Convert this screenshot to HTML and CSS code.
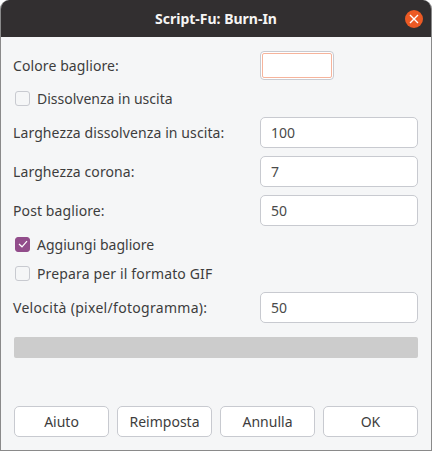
FILE: index.html
```html
<!DOCTYPE html>
<html lang="it">
<head>
<meta charset="utf-8">
<title>Script-Fu: Burn-In</title>
<link rel="stylesheet" href="styles.css">
</head>
<body>
<div class="window">
  <header class="titlebar">
    <span class="title">Script-Fu: Burn-In</span>
    <span class="close"><svg width="10" height="10" viewBox="0 0 10 10"><path d="M1 1L9 9M9 1L1 9" stroke="#fff" stroke-width="1.4" fill="none"/></svg></span>
  </header>
  <main class="content">
    <div class="row row-color">
      <label class="label">Colore bagliore:</label>
      <div class="field"><button class="color"><span class="swatch"></span></button></div>
    </div>
    <div class="check check-1"><span class="box"></span><span>Dissolvenza in uscita</span></div>
    <div class="row row-a">
      <label class="label">Larghezza dissolvenza in uscita:</label>
      <div class="field"><div class="entry">100</div></div>
    </div>
    <div class="row row-b">
      <label class="label">Larghezza corona:</label>
      <div class="field"><div class="entry">7</div></div>
    </div>
    <div class="row row-b">
      <label class="label">Post bagliore:</label>
      <div class="field"><div class="entry">50</div></div>
    </div>
    <div class="check check-2"><span class="box on"><svg width="10" height="8" viewBox="0 0 10 8"><path d="M1 4L4 6.8L9 1.2" stroke="#fff" stroke-width="1.2" fill="none"/></svg></span><span>Aggiungi bagliore</span></div>
    <div class="check check-3"><span class="box"></span><span class="wide">Prepara per il formato GIF</span></div>
    <div class="row row-c">
      <label class="label label-wide">Velocità (pixel/fotogramma):</label>
      <div class="field"><div class="entry">50</div></div>
    </div>
    <div class="progress"></div>
    <div class="buttons">
      <button class="btn">Aiuto</button>
      <button class="btn">Reimposta</button>
      <button class="btn">Annulla</button>
      <button class="btn">OK</button>
    </div>
  </main>
</div>
</body>
</html>
```
FILE: styles.css
```css
html, body { margin: 0; padding: 0; background: #fff; }
body { width: 432px; height: 451px; overflow: hidden; font-family: "Noto Sans", "Open Sans", sans-serif; font-size: 14px; color: #3d3d3d; }
.window { width: 432px; height: 451px; box-sizing: border-box; display: flex; flex-direction: column; border: 1px solid #8a8a8a; border-top: 0; border-radius: 9px 9px 0 0; background: #f5f6f7; overflow: hidden; }
.titlebar { height: 37px; flex: none; background: #322f30; display: flex; align-items: center; justify-content: center; position: relative; margin: 0 -1px; }
.title { color: #f6f5f4; font-weight: 700; font-size: 14px; }
.close { position: absolute; right: 9px; top: 10px; width: 18px; height: 18px; border-radius: 50%; background: #ec5a24; display: flex; align-items: center; justify-content: center; }
.content { flex: 1; display: flex; flex-direction: column; padding: 0 13px; }
.row { display: flex; align-items: center; }
.label { width: 246px; flex: none; margin-left: -1px; padding-right: 1px; letter-spacing: 0.1px; }
.label-wide { letter-spacing: 0.3px; }
.wide { letter-spacing: 0.15px; }
.field { flex: 1; }
.row-color { margin-top: 14px; }
.color { display: block; width: 74px; height: 29px; padding: 1px; box-sizing: border-box; background: #fff; border: 1px solid #c8cad0; border-radius: 4px; }
.swatch { display: block; height: 100%; box-sizing: border-box; background: #fff; border: 1px solid #f6b49c; border-radius: 2px; }
.entry { height: 31px; box-sizing: border-box; background: #fff; border: 1px solid #c8cad0; border-radius: 5px; padding: 0 10px; line-height: 29px; color: #4a4a4a; }
.check { display: flex; align-items: center; gap: 7px; height: 20px; padding-left: 1px; }
.box { width: 15px; height: 15px; box-sizing: border-box; flex: none; background: #f5f6f7; border: 1px solid #c8cad0; border-radius: 3px; display: flex; align-items: center; justify-content: center; }
.box.on { background: #924d8b; border-color: #924d8b; }
.check-1 { margin-top: 8px; }
.row-a { margin-top: 9px; }
.row-b { margin-top: 8px; }
.check-2 { margin-top: 8px; }
.check-3 { margin-top: 9px; }
.row-c { margin-top: 9px; }
.progress { height: 21px; margin-top: 14px; background: #cccccc; border-radius: 2px; }
.buttons { margin-top: 48px; display: flex; gap: 8px; }
.btn { flex: 1; height: 31px; box-sizing: border-box; padding: 0; background: #fff; border: 1px solid #c8cad0; border-radius: 5px; font: inherit; color: inherit; }
```
